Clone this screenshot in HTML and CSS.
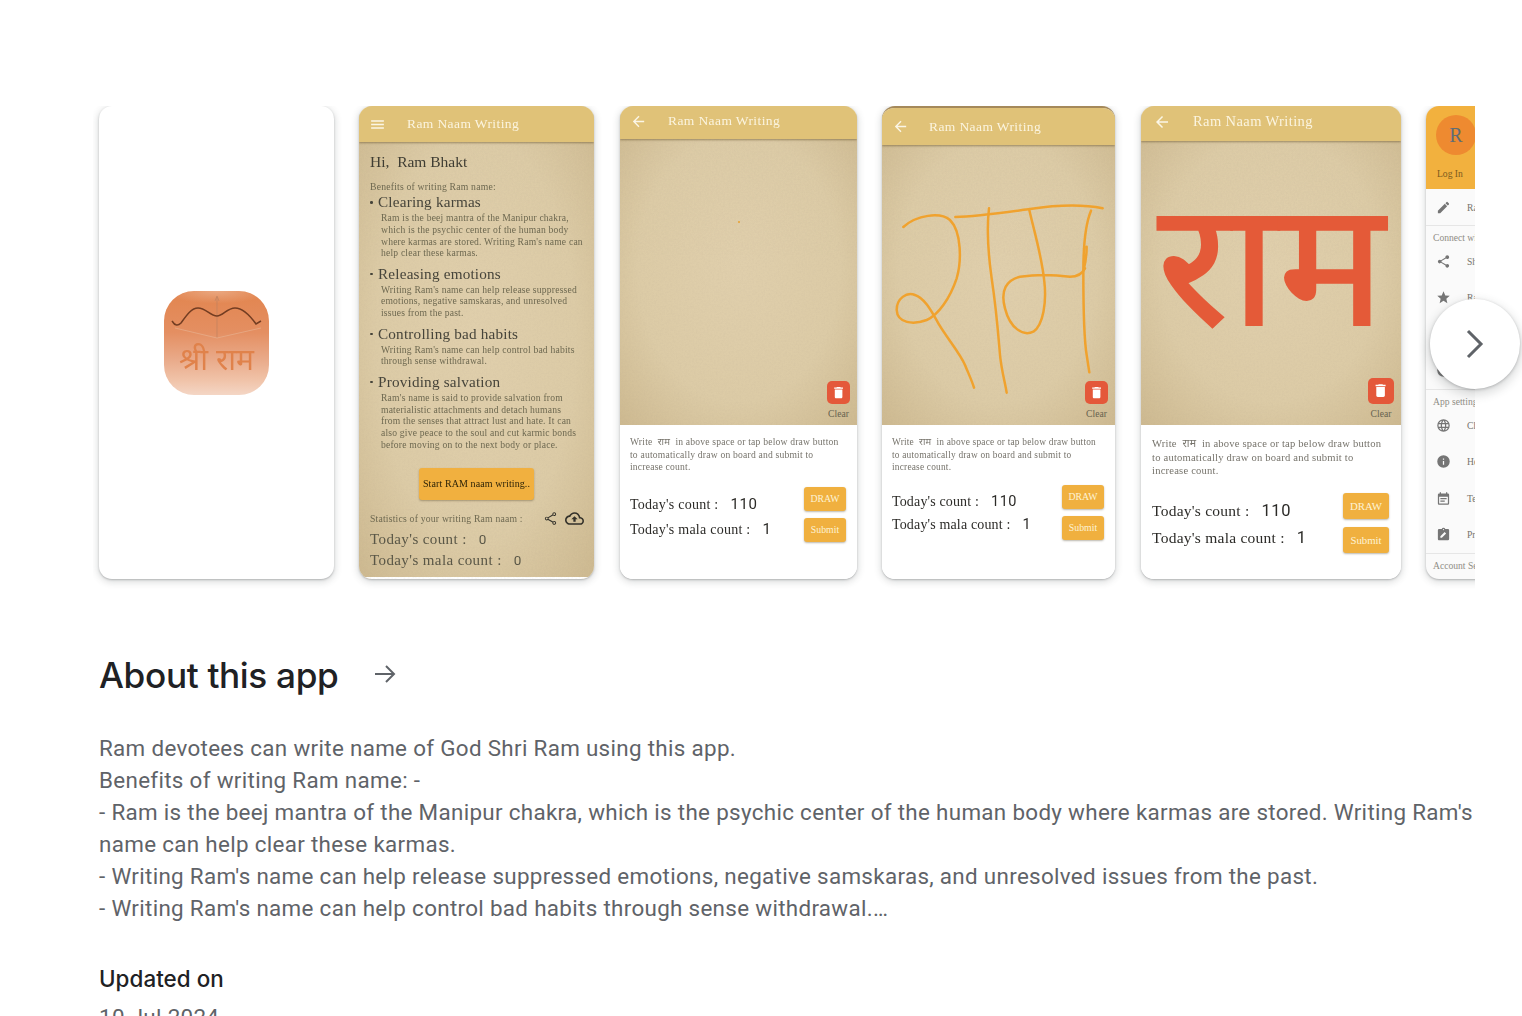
FILE: index.html
```html
<!DOCTYPE html>
<html lang="en">
<head>
    <meta charset="UTF-8">
    <meta name="viewport" content="width=device-width, initial-scale=1.0">
    <title>About this app</title>
    <link rel="stylesheet" href="styles.css">
</head>
<body>

    <!-- Paper grain used by the board screens -->
    <svg class="defs" width="0" height="0">
        <filter id="grain" x="0" y="0" width="100%" height="100%">
            <feTurbulence type="fractalNoise" baseFrequency="0.55" numOctaves="3" seed="4"/>
            <feColorMatrix values="0 0 0 0 0.35  0 0 0 0 0.28  0 0 0 0 0.22  0.9 0 0 0 -0.32"/>
        </filter>
    </svg>

    <div class="page">

        <!-- Screenshots row -->
        <div class="carousel-wrap">
            <div class="carousel">

                <div class="shot shot-logo">
                    <div class="logo">
                        <svg class="logo-bow" viewBox="0 0 105 50">
                            <path d="M53 47V6M51 10l2-5 2 5" fill="none" stroke="#bf8360" stroke-width="0.7"/>
                            <path d="M11 37L53 47 97 37" fill="none" stroke="#e8b595" stroke-width="0.6"/>
                            <path d="M8 30C11 35 14 35 17 32 22 25 27 17 34 17 42 17 46 25 53 25 59 25 63 17 71 17 79 17 87 26 92 33L97 30" fill="none" stroke="#733d22" stroke-width="1.500"/>
                        </svg>
                        <span class="logo-text">श्री राम</span>
                    </div>
                </div>

                <!-- Home screen -->
                <div class="shot shot-home">
                    <div class="appbar appbar-home">
                        <svg class="appbar-icon" viewBox="0 0 24 24"><path d="M3 18h18v-2H3v2zm0-5h18v-2H3v2zm0-7v2h18V6H3z"/></svg>
                        <span class="appbar-title">Ram Naam Writing</span>
                    </div>
                    <div class="paper home-body">
                        <svg class="grain"><rect width="100%" height="100%" filter="url(#grain)"/></svg>
                        <div class="home-hi">Hi,&nbsp; Ram Bhakt</div>
                        <div class="home-small">Benefits of writing Ram name:</div>

                        <div class="benefit-title">Clearing karmas</div>
                        <p class="benefit-text">Ram is the beej mantra of the Manipur chakra,<br>which is the psychic center of the human body<br>where karmas are stored. Writing Ram's name can<br>help clear these karmas.</p>

                        <div class="benefit-title">Releasing emotions</div>
                        <p class="benefit-text">Writing Ram's name can help release suppressed<br>emotions, negative samskaras, and unresolved<br>issues from the past.</p>

                        <div class="benefit-title">Controlling bad habits</div>
                        <p class="benefit-text">Writing Ram's name can help control bad habits<br>through sense withdrawal.</p>

                        <div class="benefit-title">Providing salvation</div>
                        <p class="benefit-text">Ram's name is said to provide salvation from<br>materialistic attachments and detach humans<br>from the senses that attract lust and hate. It can<br>also give peace to the soul and cut karmic bonds<br>before moving on to the next body or place.</p>

                        <div class="start-btn">Start RAM naam writing..</div>

                        <div class="stats-row">
                            <span class="home-small">Statistics of your writing Ram naam :</span>
                            <svg class="stats-icon" viewBox="0 0 24 24"><path d="M18 16c-.8 0-1.500.3-2 .8L8.900 12.700c.1-.2.100-.5.100-.7s0-.5-.1-.7L16 7.200c.5.500 1.200.8 2 .8 1.700 0 3-1.300 3-3s-1.300-3-3-3-3 1.300-3 3c0 .2 0 .5.100.7L8 9.800C7.500 9.300 6.800 9 6 9c-1.700 0-3 1.300-3 3s1.300 3 3 3c.8 0 1.500-.3 2-.8l7.100 4.200c-.1.200-.1.400-.1.600 0 1.600 1.300 3 3 3s3-1.400 3-3-1.300-3-3-3zm0-12.500c.8 0 1.500.7 1.500 1.500S18.800 6.500 18 6.500 16.500 5.800 16.500 5 17.200 3.500 18 3.500zm-12 10c-.8 0-1.500-.7-1.500-1.500s.7-1.500 1.500-1.500 1.500.7 1.500 1.500-.7 1.500-1.500 1.500zm12 7c-.8 0-1.500-.7-1.500-1.500s.7-1.500 1.500-1.500 1.500.7 1.500 1.500-.7 1.500-1.500 1.500z"/></svg>
                            <svg class="stats-icon stats-cloud" viewBox="0 0 24 24"><path d="M19.350 10.040C18.670 6.590 15.640 4 12 4 9.110 4 6.600 5.640 5.350 8.040 2.340 8.360 0 10.910 0 14c0 3.310 2.690 6 6 6h13c2.760 0 5-2.240 5-5 0-2.640-2.050-4.780-4.650-4.960zM19 18H6c-2.210 0-4-1.790-4-4s1.790-4 4-4h.71C7.370 7.690 9.480 6 12 6c3.040 0 5.500 2.460 5.500 5.500v.5H19c1.660 0 3 1.340 3 3s-1.340 3-3 3zM8 13h2.550v3h2.900v-3H16l-4-4z"/></svg>
                        </div>
                        <div class="home-count">Today's count :<b>0</b></div>
                        <div class="home-count">Today's mala count :<b>0</b></div>
                    </div>
                </div>

                <!-- Empty board -->
                <div class="shot shot-board board-a">
                    <div class="appbar">
                        <svg class="appbar-icon" viewBox="0 0 24 24"><path d="M20 11H7.830l5.590-5.590L12 4l-8 8 8 8 1.410-1.410L7.830 13H20v-2z"/></svg>
                        <span class="appbar-title">Ram Naam Writing</span>
                    </div>
                    <div class="paper board">
                        <svg class="grain"><rect width="100%" height="100%" filter="url(#grain)"/></svg>
                        <span class="board-dot"></span>
                        <div class="clear-tool">
                            <span class="clear-btn"><svg viewBox="0 0 24 24"><path d="M6 19c0 1.100.9 2 2 2h8c1.100 0 2-.9 2-2V7H6v12zM19 4h-3.500l-1-1h-5l-1 1H5v2h14V4z"/></svg></span>
                            <span class="clear-label">Clear</span>
                        </div>
                    </div>
                    <div class="board-info">
                        <p class="hint">Write &nbsp;राम&nbsp; in above space or tap below draw button<br>to automatically draw on board and submit to<br>increase count.</p>
                        <div class="count-row">
                            <div class="counts">
                                <div class="count-line">Today's count :<b>110</b></div>
                                <div class="count-line">Today's mala count :<b>1</b></div>
                            </div>
                            <div class="count-btns">
                                <span class="small-btn">DRAW</span>
                                <span class="small-btn">Submit</span>
                            </div>
                        </div>
                    </div>
                </div>

                <!-- Handwritten -->
                <div class="shot shot-board board-b">
                    <div class="appbar">
                        <svg class="appbar-icon" viewBox="0 0 24 24"><path d="M20 11H7.830l5.590-5.590L12 4l-8 8 8 8 1.410-1.410L7.830 13H20v-2z"/></svg>
                        <span class="appbar-title">Ram Naam Writing</span>
                    </div>
                    <div class="paper board">
                        <svg class="grain"><rect width="100%" height="100%" filter="url(#grain)"/></svg>
                        <svg class="scribble" viewBox="816 150 699 840">
                            <path d="M880 396C920 360 990 350 1020 375 1055 410 1055 500 1040 550 1020 610 985 660 950 675 910 690 862 685 860 645 860 610 890 590 915 600 945 610 965 650 985 685 1015 735 1050 775 1065 810 1075 835 1085 855 1092 878"/>
                            <path d="M1036 366C1100 365 1200 350 1260 342 1340 330 1420 328 1478 340"/>
                            <path d="M1137 340C1130 400 1135 480 1145 550 1160 650 1165 720 1170 780 1175 830 1185 860 1190 893"/>
                            <path d="M1258 345C1270 400 1295 480 1303 560 1310 620 1300 690 1270 710 1240 725 1200 700 1185 640 1170 585 1190 555 1230 545 1280 538 1340 540 1380 545 1400 545 1415 540 1425 520"/>
                            <path d="M1443 347C1425 390 1420 450 1420 530 1420 620 1420 720 1430 780L1438 832M1430 455C1430 480 1425 510 1420 530"/>
                        </svg>
                        <div class="clear-tool">
                            <span class="clear-btn"><svg viewBox="0 0 24 24"><path d="M6 19c0 1.100.9 2 2 2h8c1.100 0 2-.9 2-2V7H6v12zM19 4h-3.500l-1-1h-5l-1 1H5v2h14V4z"/></svg></span>
                            <span class="clear-label">Clear</span>
                        </div>
                    </div>
                    <div class="board-info">
                        <p class="hint">Write &nbsp;राम&nbsp; in above space or tap below draw button<br>to automatically draw on board and submit to<br>increase count.</p>
                        <div class="count-row">
                            <div class="counts">
                                <div class="count-line">Today's count :<b>110</b></div>
                                <div class="count-line">Today's mala count :<b>1</b></div>
                            </div>
                            <div class="count-btns">
                                <span class="small-btn">DRAW</span>
                                <span class="small-btn">Submit</span>
                            </div>
                        </div>
                    </div>
                </div>

                <!-- Auto drawn -->
                <div class="shot shot-board board-c">
                    <div class="appbar">
                        <svg class="appbar-icon" viewBox="0 0 24 24"><path d="M20 11H7.830l5.590-5.590L12 4l-8 8 8 8 1.410-1.410L7.830 13H20v-2z"/></svg>
                        <span class="appbar-title">Ram Naam Writing</span>
                    </div>
                    <div class="paper board">
                        <svg class="grain"><rect width="100%" height="100%" filter="url(#grain)"/></svg>
                        <span class="big-ram">राम</span>
                        <div class="clear-tool">
                            <span class="clear-btn"><svg viewBox="0 0 24 24"><path d="M6 19c0 1.100.9 2 2 2h8c1.100 0 2-.9 2-2V7H6v12zM19 4h-3.500l-1-1h-5l-1 1H5v2h14V4z"/></svg></span>
                            <span class="clear-label">Clear</span>
                        </div>
                    </div>
                    <div class="board-info">
                        <p class="hint">Write &nbsp;राम&nbsp; in above space or tap below draw button<br>to automatically draw on board and submit to<br>increase count.</p>
                        <div class="count-row">
                            <div class="counts">
                                <div class="count-line">Today's count :<b>110</b></div>
                                <div class="count-line">Today's mala count :<b>1</b></div>
                            </div>
                            <div class="count-btns">
                                <span class="small-btn">DRAW</span>
                                <span class="small-btn">Submit</span>
                            </div>
                        </div>
                    </div>
                </div>

                <!-- Side menu, cut by the row edge -->
                <div class="shot shot-menu">
                    <div class="menu-head">
                        <span class="menu-avatar">R</span>
                        <span class="menu-login">Log In</span>
                    </div>
                    <div class="menu-item menu-first">
                        <svg viewBox="0 0 24 24"><path d="M3 17.250V21h3.750L17.810 9.940l-3.750-3.750L3 17.250zM20.710 7.040a1 1 0 0 0 0-1.410l-2.340-2.340a1 1 0 0 0-1.410 0l-1.830 1.830 3.750 3.750 1.830-1.830z"/></svg>
                        <span>Ram Naam</span>
                    </div>
                    <div class="menu-label menu-line">Connect with us</div>
                    <div class="menu-item">
                        <svg viewBox="0 0 24 24"><path d="M18 16.080c-.76 0-1.440.3-1.960.77L8.910 12.700c.05-.23.090-.46.090-.7s-.04-.47-.09-.7l7.050-4.110c.54.500 1.250.81 2.040.81 1.660 0 3-1.340 3-3s-1.340-3-3-3-3 1.340-3 3c0 .24.040.47.090.7L8.040 9.810C7.500 9.310 6.790 9 6 9c-1.660 0-3 1.340-3 3s1.340 3 3 3c.79 0 1.500-.31 2.040-.81l7.120 4.160c-.05.210-.08.430-.08.650 0 1.610 1.310 2.920 2.920 2.920s2.920-1.310 2.920-2.920-1.310-2.920-2.920-2.920z"/></svg>
                        <span>Share</span>
                    </div>
                    <div class="menu-item">
                        <svg viewBox="0 0 24 24"><path d="M12 17.270 18.180 21l-1.640-7.030L22 9.240l-7.190-.61L12 2 9.190 8.630 2 9.240l5.460 4.730L5.820 21z"/></svg>
                        <span>Rate</span>
                    </div>
                    <div class="menu-item"></div>
                    <div class="menu-item">
                        <svg viewBox="0 0 24 24"><circle cx="12" cy="12" r="10"/></svg>
                    </div>
                    <div class="menu-label menu-line">App settings</div>
                    <div class="menu-item">
                        <svg viewBox="0 0 24 24"><path d="M12 2a10 10 0 1 0 0 20 10 10 0 0 0 0-20zm6.900 6h-3a15.600 15.600 0 0 0-1.400-3.600A8 8 0 0 1 18.900 8zM12 4c.8 1.200 1.500 2.500 1.900 4h-3.800c.4-1.500 1.100-2.800 1.900-4zM4.300 14a8 8 0 0 1 0-4h3.400a16 16 0 0 0 0 4H4.300zm.8 2h3c.3 1.300.8 2.500 1.400 3.600A8 8 0 0 1 5.100 16zm3-8h-3a8 8 0 0 1 4.400-3.600C8.900 5.500 8.400 6.700 8.100 8zM12 20c-.8-1.200-1.500-2.500-1.900-4h3.800c-.4 1.500-1.100 2.800-1.900 4zm2.300-6H9.700a14 14 0 0 1 0-4h4.600a14 14 0 0 1 0 4zm.2 5.600c.6-1.100 1.100-2.300 1.400-3.600h3a8 8 0 0 1-4.400 3.600zm1.800-5.600a16 16 0 0 0 0-4h3.400a8 8 0 0 1 0 4h-3.400z"/></svg>
                        <span>Change</span>
                    </div>
                    <div class="menu-item">
                        <svg viewBox="0 0 24 24"><path d="M12 2a10 10 0 1 0 0 20 10 10 0 0 0 0-20zm1 15h-2v-6h2v6zm0-8h-2V7h2v2z"/></svg>
                        <span>Help</span>
                    </div>
                    <div class="menu-item">
                        <svg viewBox="0 0 24 24"><path d="M19 4h-1V2h-2v2H8V2H6v2H5a2 2 0 0 0-2 2v14c0 1.100.9 2 2 2h14a2 2 0 0 0 2-2V6a2 2 0 0 0-2-2zm0 16H5V9h14v11zM7 11h10v2H7v-2zm0 4h7v2H7v-2z"/></svg>
                        <span>Terms</span>
                    </div>
                    <div class="menu-item">
                        <svg viewBox="0 0 24 24"><path d="M19 3h-4.200A3 3 0 0 0 12 1a3 3 0 0 0-2.800 2H5a2 2 0 0 0-2 2v14c0 1.100.9 2 2 2h14a2 2 0 0 0 2-2V5a2 2 0 0 0-2-2zM12 3a1 1 0 1 1 0 2 1 1 0 0 1 0-2zM9.400 17H7v-2.400l6.800-6.800 2.400 2.400L9.400 17z"/></svg>
                        <span>Privacy</span>
                    </div>
                    <div class="menu-label menu-line menu-last">Account Settings</div>
                </div>

            </div>

            <div class="next-btn">
                <svg viewBox="0 0 24 34"><path d="M5 4l13 13L5 30"/></svg>
            </div>
        </div>

        <!-- About -->
        <div class="about-head">
            <h2>About this app</h2>
            <svg class="about-arrow" viewBox="0 0 24 24"><path d="M2 12h19M13 4l8 8-8 8"/></svg>
        </div>

        <div class="about-text">
            Ram devotees can write name of God Shri Ram using this app.<br>
            Benefits of writing Ram name: -<br>
            - Ram is the beej mantra of the Manipur chakra, which is the psychic center of the human body where karmas are stored. Writing Ram's name can help clear these karmas.<br>
            - Writing Ram's name can help release suppressed emotions, negative samskaras, and unresolved issues from the past.<br>
            - Writing Ram's name can help control bad habits through sense withdrawal.…
        </div>

        <div class="updated-label">Updated on</div>
        <div class="updated-value">10 Jul 2024</div>
    </div>

</body>
</html>
```

FILE: styles.css
```css
* {
    margin: 0;
    padding: 0;
    box-sizing: border-box;
}

html, body {
    height: 100%;
    overflow: hidden;
}

body {
    font-family: 'Roboto', sans-serif;
    background-color: #fff;
    color: #202124;
}

.defs {
    display: block;
    height: 0;
}

.page {
    padding: 106px 47px 0 99px;
}

/* carousel */
.carousel-wrap {
    position: relative;
}

.carousel {
    display: flex;
    gap: 25px;
    overflow: hidden;
    padding-bottom: 12px;
    margin-bottom: -12px;
    margin-left: -6px;
    padding-left: 6px;
}

.shot {
    flex: none;
    height: 473px;
    border-radius: 13px;
    overflow: hidden;
    background-color: #fff;
    box-shadow: 0 1px 2px rgba(60, 64, 67, 0.3), 0 2px 6px 2px rgba(60, 64, 67, 0.15);
    font-family: 'Liberation Serif', 'Noto Sans', serif;
    display: flex;
    flex-direction: column;
}

.shot-logo {
    width: 235px;
    align-items: center;
    justify-content: center;
}

.logo {
    width: 105px;
    height: 104px;
    border-radius: 30px;
    background: radial-gradient(ellipse 50% 12% at 50% 0, #eaa881 0, rgba(234, 168, 129, 0) 100%), linear-gradient(#e2854f 0, #e48f62 40%, #e9a988 65%, #f0c2a7 85%, #f4d6c5 100%);
    display: flex;
    flex-direction: column;
    align-items: center;
    filter: blur(0.3px);
}

.logo-bow {
    display: block;
    width: 105px;
    height: 50px;
}

.logo-text {
    font-family: 'Noto Sans', sans-serif;
    font-size: 30px;
    line-height: 36px;
    color: #e0824b;
}

/* app bar */
.appbar {
    flex: none;
    display: flex;
    align-items: center;
    height: 33px;
    padding: 0 0 3px 10px;
    background-color: #e0c278;
    box-shadow: 0 1px 2px rgba(90, 70, 30, 0.5);
    position: relative;
    z-index: 1;
    color: #fbf4df;
}

.appbar-home {
    height: 36px;
    padding-bottom: 0;
}

.appbar-icon {
    width: 17px;
    height: 17px;
    fill: #fbf6e6;
}

.appbar-title {
    margin-left: 21px;
    font-size: 13.500px;
    letter-spacing: 0.4px;
    white-space: nowrap;
    filter: blur(0.3px);
}

.paper {
    position: relative;
    background: radial-gradient(ellipse at 50% 45%, #e0cfac 0, #dccba6 60%, #cdb990 100%);
}

.grain {
    position: absolute;
    left: 0;
    top: 0;
    width: 100%;
    height: 100%;
    opacity: 0.14;
}

/* home screen */
.shot-home {
    width: 235px;
}

.home-body {
    flex: 1;
    padding: 10px 11px 0;
    color: #55523f;
    box-shadow: inset 0 -2px 0 #fff;
}

.home-body > div, .home-body > p {
    position: relative;
    filter: blur(0.25px);
}

.home-hi {
    font-size: 15.500px;
    line-height: 19px;
    color: #3f3d33;
}

.home-small {
    font-size: 9.700px;
    line-height: 12px;
    letter-spacing: 0.2px;
    color: #6d6850;
    white-space: nowrap;
}

.home-hi + .home-small {
    margin-top: 10px;
}

.benefit-title {
    font-size: 15.200px;
    line-height: 18px;
    letter-spacing: 0.2px;
    color: #46443a;
    padding: 0 0 1px 8px;
}

.benefit-title::before {
    content: "";
    position: absolute;
    left: 0;
    top: 8px;
    width: 2.500px;
    height: 2.500px;
    border-radius: 50%;
    background-color: #46443a;
}

.benefit-text {
    font-size: 9.600px;
    line-height: 11.750px;
    letter-spacing: 0.2px;
    padding-left: 11px;
    margin-bottom: 5.700px;
    white-space: nowrap;
    color: #6d6850;
}

.start-btn {
    width: 115px;
    height: 32px;
    margin: 17px auto 12px;
    border-radius: 3px;
    background-color: #f1b03f;
    box-shadow: 0 1px 2px rgba(60, 50, 20, 0.35);
    color: #2e2408;
    font-size: 10px;
    letter-spacing: 0.1px;
    text-align: center;
    line-height: 32px;
}

.stats-row {
    display: flex;
    align-items: center;
    gap: 7px;
    height: 14px;
    margin-right: -1px;
}

.stats-row .home-small {
    margin-right: auto;
}

.stats-icon {
    width: 15px;
    height: 15px;
    fill: #33312a;
}

.stats-cloud {
    width: 19px;
    height: 19px;
}

.home-count {
    font-size: 15px;
    line-height: 21.500px;
    letter-spacing: 0.4px;
    color: #5a5747;
}

.stats-row + .home-count {
    margin-top: 3px;
}

.home-count b {
    font-family: 'Roboto', sans-serif;
    font-weight: 400;
    font-size: 13.500px;
    margin-left: 12px;
}

/* drawing board screens */
.shot-board {
    --clear: 23px;
}

.board {
    flex: 1;
    display: flex;
    align-items: flex-end;
    justify-content: flex-end;
}

.board-info {
    flex: none;
    height: 154px;
    background-color: #fff;
    padding: 10px 11px 0 10px;
}

.hint {
    font-size: 9.600px;
    line-height: 12.500px;
    letter-spacing: 0.2px;
    padding-top: 1px;
    color: #76736b;
    white-space: nowrap;
    filter: blur(0.25px);
}

.count-row {
    display: flex;
    justify-content: space-between;
    align-items: flex-start;
    margin-top: 13px;
}

.counts {
    padding-top: 5px;
}

.count-line {
    font-size: 14px;
    line-height: 24px;
    letter-spacing: 0.25px;
    color: #2c2b28;
    white-space: nowrap;
    filter: blur(0.2px);
}

.count-line b {
    font-family: 'Roboto', sans-serif;
    font-weight: 400;
    font-size: 15px;
    letter-spacing: 0.5px;
    margin-left: 12px;
}

.count-btns {
    display: flex;
    flex-direction: column;
    gap: 7px;
}

.small-btn {
    display: block;
    width: 42px;
    height: 24px;
    border-radius: 3px;
    background-color: #f0b03f;
    box-shadow: 0 1px 2px rgba(60, 50, 20, 0.35);
    color: #fdf3d6;
    font-size: 9.800px;
    line-height: 24px;
    text-align: center;
}

.clear-tool {
    display: flex;
    flex-direction: column;
    align-items: center;
    margin: 0 7px 6px 0;
    position: relative;
}

.clear-btn {
    display: flex;
    align-items: center;
    justify-content: center;
    width: var(--clear);
    height: var(--clear);
    border-radius: 5px;
    background-color: #e4583a;
}

.clear-btn svg {
    width: 66%;
    height: 66%;
    fill: #fff;
}

.clear-label {
    margin-top: 4px;
    font-size: 9.600px;
    line-height: 11px;
    color: #66624f;
}

.board-a {
    width: 237px;
    margin-left: 1px;
}

.board-dot {
    position: absolute;
    left: 118px;
    top: 82px;
    width: 2px;
    height: 2px;
    border-radius: 50%;
    background-color: #e8a030;
}

.board-b {
    width: 233px;
    border-top: 2px solid #a5895a;
}

.board-b .appbar {
    height: 37px;
    padding-bottom: 0;
}

.board-b .appbar-title {
    margin-left: 20px;
}

.board-b .hint {
    font-size: 9.400px;
}

.board-b .count-row {
    margin-top: 11px;
}

.board-b .count-line {
    line-height: 23px;
    letter-spacing: 0.15px;
}

.board-b .count-line b {
    font-size: 14.500px;
}

.scribble {
    position: absolute;
    left: 0;
    top: 0;
    width: 100%;
    height: 100%;
    fill: none;
    stroke: #f0a22e;
    stroke-width: 7.500;
    stroke-linecap: round;
    filter: blur(0.3px);
}

.board-c {
    width: 260px;
    margin-left: 1px;
    --clear: 26px;
}

.board-c .appbar {
    height: 35px;
    padding: 0 0 4px 12px;
}

.board-c .appbar-icon {
    width: 18px;
    height: 18px;
}

.board-c .appbar-title {
    margin-left: 22px;
    font-size: 14.500px;
}

.board-c .hint {
    font-size: 10.600px;
    line-height: 13.700px;
}

.board-c .board-info {
    padding: 11px 12px 0 11px;
}

.board-c .count-row {
    margin-top: 15px;
}

.board-c .counts {
    padding-top: 4px;
}

.board-c .count-line {
    font-size: 15.500px;
    line-height: 27px;
}

.board-c .count-line b {
    font-size: 16.500px;
}

.board-c .small-btn {
    width: 46px;
    height: 26px;
    line-height: 26px;
    font-size: 10.800px;
}

.board-c .count-btns {
    gap: 8px;
}

.big-ram {
    position: absolute;
    left: 0;
    right: 0;
    top: -3px;
    text-align: center;
    font-family: 'Noto Sans', sans-serif;
    font-weight: 500;
    font-size: 176px;
    line-height: 240px;
    color: #e45a38;
}

/* side menu */
.shot-menu {
    width: 200px;
    font-size: 9.600px;
    color: #77756d;
    background-color: #fafafa;
}

.menu-head {
    flex: none;
    height: 83px;
    padding: 9px 10px 0;
    background-color: #f2b13e;
    display: flex;
    flex-direction: column;
}

.menu-avatar {
    width: 40px;
    height: 40px;
    border-radius: 50%;
    background-color: #ee8a30;
    color: #5f6d75;
    font-size: 20px;
    line-height: 40px;
    text-align: center;
}

.menu-login {
    margin-top: 13px;
    padding-left: 1px;
    color: #7a5a20;
}

.menu-item {
    flex: none;
    display: flex;
    align-items: center;
    height: 36.500px;
    padding-left: 10px;
    gap: 16px;
    white-space: nowrap;
}

.menu-first {
    height: 36px;
}

.menu-item svg {
    width: 15px;
    height: 15px;
    flex: none;
    fill: #757575;
}

.menu-label {
    flex: none;
    height: 18px;
    line-height: 24px;
    padding-left: 7px;
    color: #8f8d85;
    white-space: nowrap;
}

.menu-last {
    line-height: 23px;
}

.menu-line {
    border-top: 1px solid #e6e6e6;
}

.next-btn {
    position: absolute;
    right: -45px;
    top: 193px;
    width: 90px;
    height: 90px;
    border-radius: 50%;
    background-color: #fff;
    box-shadow: 0 1px 3px rgba(60, 64, 67, 0.3), 0 4px 8px 3px rgba(60, 64, 67, 0.15);
    display: flex;
    align-items: center;
    justify-content: center;
}

.next-btn svg {
    width: 24px;
    height: 34px;
    fill: none;
    stroke: #5f6368;
    stroke-width: 3;
}

/* about */
.about-head {
    display: flex;
    align-items: center;
    gap: 35px;
    margin-top: 72px;
    height: 48px;
}

.about-head h2 {
    font-family: 'Inter', sans-serif;
    font-weight: 500;
    font-size: 35.200px;
    letter-spacing: -0.35px;
    line-height: 48px;
    color: #202124;
}

.about-arrow {
    width: 24px;
    height: 24px;
    fill: none;
    stroke: #5f6368;
    stroke-width: 2;
    margin-top: -2px;
}

.about-text {
    margin-top: 33px;
    font-size: 22.400px;
    line-height: 32px;
    letter-spacing: 0.32px;
    color: #5f6368;
}

.updated-label {
    margin-top: 39px;
    font-family: 'Inter', sans-serif;
    font-weight: 500;
    font-size: 22.400px;
    letter-spacing: 0.05px;
    line-height: 32px;
    color: #202124;
}

.updated-value {
    margin-top: 6px;
    font-size: 22.400px;
    line-height: 32px;
    letter-spacing: 0.32px;
    color: #5f6368;
}
```
